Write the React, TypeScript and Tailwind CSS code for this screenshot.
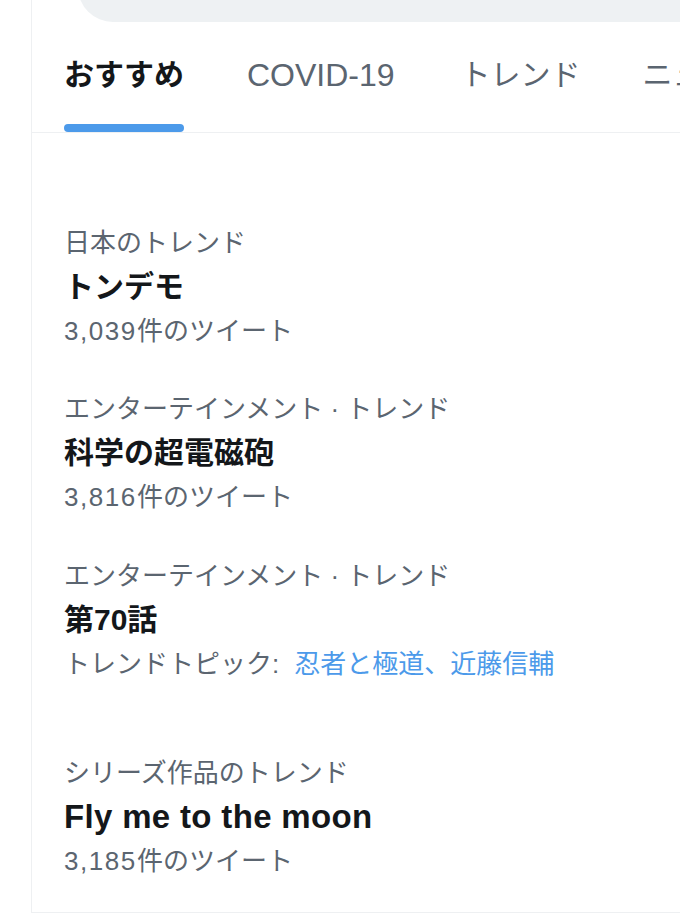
import React from "react";

const tabs = ["おすすめ", "COVID-19", "トレンド", "ニュース", "スポーツ"];

type Trend = {
  label: string;
  title: string;
  count?: [string, string];
  topics?: string[];
  gap: string;
  latin?: boolean;
};

const trends: Trend[] = [
  { label: "日本のトレンド", title: "トンデモ", count: ["3,039", "件のツイート"], gap: "mt-0" },
  { label: "エンターテインメント · トレンド", title: "科学の超電磁砲", count: ["3,816", "件のツイート"], gap: "mt-[35px]" },
  { label: "エンターテインメント · トレンド", title: "第70話", topics: ["忍者と極道", "近藤信輔"], gap: "mt-[36px]" },
  { label: "シリーズ作品のトレンド", title: "Fly me to the moon", count: ["3,185", "件のツイート"], gap: "mt-[66px]", latin: true },
];

export default function App() {
  return (
    <div
      className="w-[680px] h-[920px] bg-white overflow-hidden"
      style={{ fontFamily: '"Liberation Sans", "Noto Sans CJK JP", sans-serif' }}
    >
      <div className="ml-[31px] h-[913px] border-l border-[#eef0f2] flex flex-col">
        {/* search bar edge */}
        <div className="h-[22px] overflow-hidden">
          <div className="ml-[46px] mt-[-48px] h-[70px] w-[700px] rounded-full bg-[#eef1f3]" />
        </div>

        {/* Tabs */}
        <div className="h-[111px] border-b border-[#eef0f2] flex overflow-hidden whitespace-nowrap">
          {tabs.map((tab, i) => (
            <div
              key={tab}
              className={`flex flex-col shrink-0 ${
                i === 0 ? "pl-[32px] pr-[63px]" : i === 1 ? "pr-[66px]" : "pr-[62px]"
              }`}
            >
              <span
                className={`mt-[31px] leading-[44px] ${
                  i === 0
                    ? "text-[30px] font-bold text-[#14171a]"
                    : tab === "COVID-19"
                    ? "text-[32px] text-[#5b6570]"
                    : "text-[30px] text-[#5b6570]"
                }`}
              >
                {tab}
              </span>
              {i === 0 && <div className="mt-auto h-[8px] rounded-full bg-[#4c9aea]" />}
            </div>
          ))}
        </div>

        {/* Trends */}
        <div className="flex-1 pt-[89px] px-[32px] border-b border-[#eef0f2]">
          {trends.map((t) => (
            <div key={t.title} className={t.gap}>
              <div className="text-[26px] leading-[43px] text-[#5b6570] whitespace-nowrap">{t.label}</div>
              <div
                className={`font-bold leading-[44px] text-[#14171a] whitespace-nowrap ${
                  t.latin ? "text-[33px] tracking-[0.01em]" : "text-[30px]"
                }`}
              >
                {t.title}
              </div>
              {t.count && (
                <div className="text-[26px] leading-[44px] text-[#5b6570] whitespace-nowrap">
                  <span className="tracking-[0.06em]">{t.count[0]}</span>
                  {t.count[1]}
                </div>
              )}
              {t.topics && (
                <div className="text-[26px] leading-[44px] text-[#5b6570] whitespace-nowrap">
                  トレンドトピック:
                  <span className="ml-[15px] text-[#4c9aea]">{t.topics.join("、")}</span>
                </div>
              )}
            </div>
          ))}
        </div>
      </div>
    </div>
  );
}
